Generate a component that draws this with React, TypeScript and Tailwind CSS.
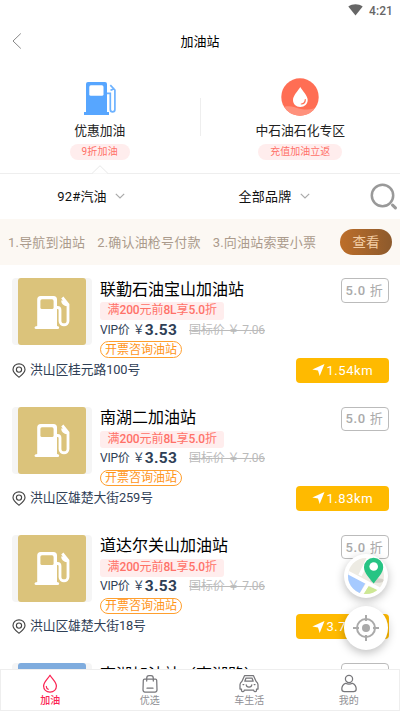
import { ReactNode } from 'react';

interface Station {
  name: string;
  address: string;
  distance: string;
  photo?: boolean;
}

const stations: Station[] = [
  { name: '联勤石油宝山加油站', address: '洪山区桂元路100号', distance: '1.54km' },
  { name: '南湖二加油站', address: '洪山区雄楚大街259号', distance: '1.83km' },
  { name: '道达尔关山加油站', address: '洪山区雄楚大街18号', distance: '3.72km' },
];

// only its top edge shows above the tab bar
const nextStation = '南湖加油站（南湖路）';

const steps = ['1.导航到油站', '2.确认油枪号付款', '3.向油站索要小票'];

const StatusBar = () => (
  <div className="flex h-[22px] shrink-0 items-center justify-end pr-[7px] text-[#666]">
    <svg viewBox="0 0 15 12" className="mt-[-3px] mr-[6px] h-[12px] w-[15px]" fill="currentColor">
      <path d="M0.3 2.5C4.5-.5 10.5-.5 14.7 2.5L7.5 11.5Z" />
    </svg>
    <span className="text-[12px] leading-none font-medium tracking-[0.1px]">4:21</span>
  </div>
);

const BluePump = () => (
  <svg viewBox="0 0 34 35" className="mr-[2px] h-[35px] w-[34px]" fill="none">
    <path d="M4 31V3Q4 1 6 1H23Q25 1 25 3V31H27V34H2V31Z" fill="#57a6ff" />
    <rect x="7.3" y="4.3" width="14.2" height="10.5" rx="1.6" fill="#fff" />
    <path d="M25 12.3H28.3V28.5C28.3 31.6 32.9 31.6 32.9 28.5V9L28.3 4.2M28.5 9.3L32.5 7.6" stroke="#6db2ff" strokeWidth="1.7" />
  </svg>
);

const DropBadge = () => (
  <svg viewBox="0 0 38 38" className="h-[38px] w-[38px]" fill="none">
    <defs>
      <clipPath id="disc"><circle cx="19" cy="19" r="18.7" /></clipPath>
    </defs>
    <g clipPath="url(#disc)">
      <rect width="38" height="38" fill="#ff6e54" />
      <path d="M0 30C8 26 14 30 20 31C27 32 31 32 38 28V38H0Z" fill="#ff917c" />
    </g>
    <path d="M19.3 9C17 13 12 17.5 12 22C12 26 15 29 19.3 29S26.7 26 26.7 22C26.7 17.5 21.5 13 19.3 9Z" fill="#fff" />
    <path d="M24.3 21.5C24.3 24 22.7 25.8 20.3 26" stroke="#ff6e54" strokeWidth="1.2" strokeLinecap="round" />
  </svg>
);

const WhitePump = () => (
  <svg viewBox="0 0 36 34" className="h-[34px] w-[36px]" fill="none">
    <path d="M3.2 31V4.5Q3.2 1 6.7 1H19.5Q23 1 23 4.5V31Q25.2 31.2 25.2 32.5Q25.2 34 23.5 34H2.3Q.5 34 .5 32.5Q.5 31.2 3.2 31Z" fill="#fff" />
    <rect x="6.4" y="4.3" width="13.2" height="9.8" rx="1.6" fill="#dbc37b" />
    <path d="M22 12.5H23.5Q26 12.5 26 15V26C26 31 34 31 34 26V9.5L28.3 2.5M28.5 5.5Q28.8 9.5 33.5 10" stroke="#fff" strokeWidth="2.8" />
  </svg>
);

const Pin = () => (
  <svg viewBox="0 0 14 15" className="h-[15px] w-[14px] shrink-0" fill="none" stroke="#444" strokeWidth="1.15">
    <path d="M7 14.2C4.5 12.2 1 9.8 1 6.6C1 3.2 3.7 .8 7 .8S13 3.2 13 6.6C13 9.8 9.5 12.2 7 14.2Z" />
    <circle cx="7" cy="6.6" r="2.6" />
  </svg>
);

const Chevron = () => (
  <svg viewBox="0 0 10 6" className="mb-[2px] h-[6px] w-[10px]" fill="none" stroke="#aaa" strokeWidth="1.2">
    <path d="M.8 .8L5 5L9.2 .8" />
  </svg>
);

const StationRow = ({ station }: { station: Station }) => (
  <div className="h-[128.3px] shrink-0 pt-[13.3px] pr-[11.5px] pl-[12px]">
    <div className="flex h-[79.5px]">
      <div className="flex h-[67px] w-[79.5px] shrink-0 justify-center rounded-[4px] bg-[#f5f5f5]">
        <div className="flex h-full w-[68px] items-center justify-center rounded-[3px] bg-[#dbc37b]">
          <WhitePump />
        </div>
      </div>
      <div className="flex grow flex-col items-start pl-[8.5px] whitespace-nowrap">
        <h3 className="h-[24.2px] pt-[0.5px] text-[16px] leading-[22px] text-black">{station.name}</h3>
        <div className="h-[17.5px] w-[124px] rounded-[3px] bg-[#ffeded] pl-[7.5px] text-[12px] leading-[17.5px] tracking-[-0.1px] text-[#ff7168]">
          满<span className="font-medium">200</span>元前<span className="font-medium">8L</span>享<span className="font-medium">5.0</span>折
        </div>
        <div className="flex h-[20.5px] items-center text-[12px] leading-[19px] text-[#2f4056]">
          <span className="tracking-[-0.2px]">VIP价</span>
          <span className="ml-[3px]">￥</span>
          <span className="text-[15.5px] font-bold tracking-[0.3px]">3.53</span>
          <span className="ml-[12px] tracking-[-0.15px] text-[#bbb] line-through">国标价 ￥ 7.06</span>
        </div>
        <div className="mt-[0.8px] flex h-[16.5px] shrink-0 items-center rounded-full border border-[#ff9f2e] px-[4px] text-[12px] leading-none text-[#ff9418]">
          开票咨询油站
        </div>
      </div>
      <div className="flex h-[24.5px] w-[48px] shrink-0 items-center justify-center rounded-[4px] border border-[#bbb] text-[13px] leading-none tracking-[0.7px] whitespace-nowrap text-[#aaa]">
        <span className="font-medium">5.0</span>&nbsp;折
      </div>
    </div>
    <div className="flex h-[24.5px] items-center justify-between">
      <div className="flex items-center gap-[4px] text-[12.8px] leading-none tracking-[-0.1px] text-[#2f4056]">
        <Pin />
        <span>{station.address}</span>
      </div>
      <div className="flex h-[25px] w-[93px] items-center rounded-[4px] bg-[#ffba00] pl-[16px] text-[13px] leading-none tracking-[0.55px] text-white">
        <svg viewBox="0 0 13 12" className="mr-[2px] h-[12px] w-[13px]" fill="currentColor">
          <path d="M12.5 0L.3 5.5L6 6.5L7.7 12Z" />
        </svg>
        {station.distance}
      </div>
    </div>
  </div>
);

const TabItem = ({ label, active, children }: { label: string; active?: boolean; children: ReactNode }) => (
  <div className={`flex flex-1 flex-col items-center pt-[4px] ${active ? 'font-medium text-[#fb2453]' : 'text-[#8f8f94]'}`}>
    <svg viewBox="0 0 20 19" className="mr-px h-[19px] w-[20px]" fill="none" stroke={active ? '#fb2453' : '#77777b'} strokeWidth="1.25" strokeLinecap="round" strokeLinejoin="round">
      {children}
    </svg>
    <span className="mt-[1px] mr-px text-[10px] leading-[14px]">{label}</span>
  </div>
);

const App = () => (
  <div className="relative flex h-[711px] w-[400px] flex-col overflow-hidden bg-white font-['Roboto','Noto_Sans_CJK_SC',sans-serif] text-[#222]">
    <StatusBar />
    <header className="grid h-[38px] shrink-0 grid-cols-3 items-center">
      <svg viewBox="0 0 10 16" className="ml-[12px] h-[16px] w-[10px]" fill="none" stroke="#888" strokeWidth="1">
        <path d="M8.8 .5L1 8L8.8 15.5" />
      </svg>
      <h1 className="text-center text-[13px] leading-none text-black">加油站</h1>
    </header>

    <div className="flex h-[114px] shrink-0 border-b border-[#eee]">
      <div className="relative flex flex-1 flex-col items-center pt-[21px]">
        <BluePump />
        <div className="mt-[5px] text-[12.8px] leading-[20px]">优惠加油</div>
        <div className="mt-[2.5px] h-[16px] w-[60px] rounded-full bg-[#ffeded] text-center text-[10px] leading-[16px] text-[#ff7168]">
          <span className="tracking-[0.2px]">9折加油</span>
        </div>
        <svg viewBox="0 0 16 9" className="absolute -bottom-px h-[9px] w-[16px]" fill="#fff" stroke="#e8e8e8">
          <path d="M0 8.5L8 .7L16 8.5" />
        </svg>
      </div>
      <div className="mt-[38px] h-[38px] w-px bg-[#eee]" />
      <div className="flex flex-1 flex-col items-center pt-[18px]">
        <DropBadge />
        <div className="mt-[5px] text-[12.8px] leading-[20px]">中石油石化专区</div>
        <div className="mt-[2.5px] h-[16px] w-[84px] rounded-full bg-[#ffeded] text-center text-[10px] leading-[16px] text-[#ff7168]">充值加油立返</div>
      </div>
    </div>

    <div className="flex h-[45px] shrink-0 items-center text-[13px] leading-none text-[#111]">
      <div className="flex w-[182px] items-center justify-center gap-[8px]">
        <span className="tracking-[0.2px]">92#汽油</span>
        <Chevron />
      </div>
      <div className="flex w-[184px] items-center justify-center gap-[8px]">
        <span className="tracking-[0.3px]">全部品牌</span>
        <Chevron />
      </div>
      <svg viewBox="0 0 28 28" className="ml-[4px] h-[28px] w-[28px]" fill="none" stroke="#999">
        <circle cx="12.5" cy="12.5" r="10.7" strokeWidth="2.5" />
        <path d="M22.6 22.2L25.4 24.8" strokeWidth="3.2" strokeLinecap="round" />
      </svg>
    </div>

    <div className="flex h-[46px] shrink-0 items-center bg-[#fcf8f3] pl-[8px] text-[13px] leading-none whitespace-nowrap text-[#ab9b8c]">
      <div className="flex w-[332px] gap-[12px]">
        {steps.map((step) => (
          <span key={step} className="tracking-[0.2px]">{step}</span>
        ))}
      </div>
      <button className="h-[26px] w-[52px] rounded-full bg-gradient-to-r from-[#bd6e29] to-[#8d5a2c] text-[13.5px] leading-[25px] text-[#f3cda3]">查看</button>
    </div>

    <main className="flex h-[404px] shrink-0 flex-col overflow-hidden">
      {stations.map((station) => (
        <StationRow key={station.name} station={station} />
      ))}
      <div className="flex shrink-0 pt-[13.3px] pr-[11.5px] pl-[12px]">
        <div className="flex h-[67px] w-[79.5px] shrink-0 justify-center rounded-[4px] bg-[#f5f5f5]">
          <div className="h-full w-[68px] rounded-[3px] bg-[#7facde]" />
        </div>
        <h3 className="grow pt-[0.5px] pl-[8.5px] text-[16px] leading-[22px] whitespace-nowrap text-black">{nextStation}</h3>
        <div className="h-[24.5px] w-[48px] shrink-0 rounded-[4px] border border-[#bbb]" />
      </div>
    </main>

    <nav className="flex h-[42px] shrink-0 border border-[#eee] bg-white">
      <TabItem label="加油" active>
        <path d="M10 1.2C8 4.8 3.6 8.2 3.6 12C3.6 15.5 6.2 18 10 18S16.4 15.5 16.4 12C16.4 8.2 12 4.8 10 1.2Z" />
        <path d="M6.3 12.5Q6.5 14.5 8.2 15.3" />
      </TabItem>
      <TabItem label="优选">
        <path d="M4.5 5H15.5Q16.6 5 16.7 6.2L17 15.8Q17 18 15 18H5Q3 18 3 15.8L3.3 6.2Q3.4 5 4.5 5ZM6.7 7V4.3Q6.7 1.5 9 1.5H11Q13.3 1.5 13.3 4.3V7M7 14.2H13" />
      </TabItem>
      <TabItem label="车生活">
        <path d="M5.5 1.7H14.5L17 7.2Q19.2 9 19 11V15H17.5V16.5Q17.5 17.5 16.5 17.5H15.7Q14.7 17.5 14.7 16H5.3Q5.3 17.5 4.3 17.5H3.5Q2.5 17.5 2.5 16.5V15H1V11Q.8 9 3 7.2ZM7 4H13L14.2 7.2H5.8ZM7.2 10.8Q7.4 13.2 10 13.2T12.8 10.8M4 10.5H4.8M15.2 10.5H16" />
      </TabItem>
      <TabItem label="我的">
        <circle cx="10" cy="5" r="3.6" />
        <path d="M6.5 9.3C4 10.3 2.8 12.5 2.8 15Q2.8 17.7 5.5 17.7H14.5Q17.2 17.7 17.2 15C17.2 12.5 16 10.3 13.5 9.3Q10 11 6.5 9.3Z" />
      </TabItem>
    </nav>

    <div className="absolute top-[554px] right-[12px] flex flex-col gap-[8px]">
      <div className="h-[44px] w-[44px] rounded-full bg-white shadow-[0_3px_10px_rgba(0,0,0,0.25)]">
        <svg viewBox="0 0 44 44" className="h-full w-full">
          <defs>
            <clipPath id="map"><circle cx="22" cy="22" r="18" /></clipPath>
          </defs>
          <g clipPath="url(#map)">
            <rect width="44" height="44" fill="#edebe3" />
            <path d="M0 17L22 28L13 44H0Z" fill="#a6caff" />
            <path d="M24 32L36 37L33 44H17Z" fill="#cde894" />
            <path d="M2 17.5L40 37.5M25.5 2L16 21.5M25 28L15 44" stroke="#fff" strokeWidth="3.6" />
            <ellipse cx="33" cy="26.5" rx="7" ry="2.3" fill="#d4d1c9" />
          </g>
          <path d="M29.7 29.5C26 25 20 19 20 13.3A9.6 9.6 0 0 1 39.2 13.3C39.2 19 33 25 29.7 29.5Z" fill="#27c484" />
          <circle cx="29.7" cy="12.5" r="4.3" fill="#fff" />
        </svg>
      </div>
      <div className="flex h-[44px] w-[44px] items-center justify-center rounded-full bg-white shadow-[0_3px_10px_rgba(0,0,0,0.25)]">
        <svg viewBox="0 0 28 28" className="h-[28px] w-[28px]" fill="none" stroke="#aaa" strokeWidth="2">
          <circle cx="14" cy="14" r="9" />
          <circle cx="14" cy="14" r="4" fill="#aaa" stroke="none" />
          <path d="M14 1V7M14 21V27M1 14H7M21 14H27" />
        </svg>
      </div>
    </div>
  </div>
);

export default App;
